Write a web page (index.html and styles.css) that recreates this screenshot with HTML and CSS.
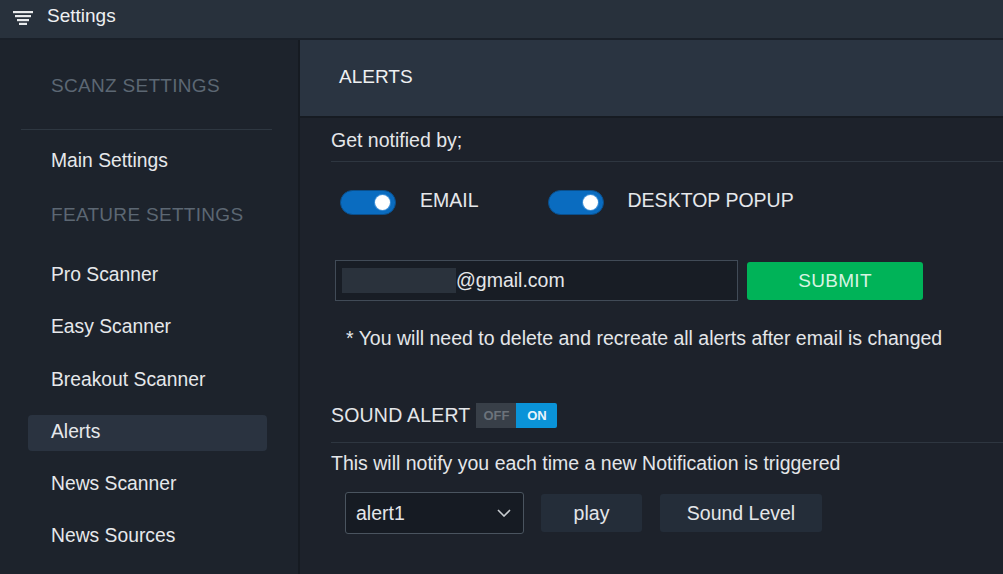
FILE: index.html
```html
<!DOCTYPE html>
<html>
<head>
<meta charset="utf-8">
<link rel="stylesheet" href="styles.css">
</head>
<body>
<div class="app">
  <header class="topbar">
    <svg class="menu-icon" width="20" height="14" viewBox="0 0 20 14">
      <rect x="0" y="0" width="20" height="2.2" fill="#e8eaec"/>
      <rect x="2" y="4" width="16" height="2.2" fill="#e8eaec"/>
      <rect x="4" y="8" width="12" height="2.2" fill="#e8eaec"/>
      <rect x="6" y="11.8" width="8" height="2.2" fill="#e8eaec"/>
    </svg>
    <span class="topbar-title">Settings</span>
  </header>
  <div class="body">
    <aside class="sidebar">
      <div class="sec-title first">SCANZ SETTINGS</div>
      <div class="side-divider"></div>
      <div class="item main-item">Main Settings</div>
      <div class="sec-title feature">FEATURE SETTINGS</div>
      <nav class="items">
        <div class="item">Pro Scanner</div>
        <div class="item">Easy Scanner</div>
        <div class="item">Breakout Scanner</div>
        <div class="item active">Alerts</div>
        <div class="item">News Scanner</div>
        <div class="item">News Sources</div>
      </nav>
    </aside>
    <main class="main">
      <div class="main-header">ALERTS</div>
      <div class="content">
        <div class="text-line notified">Get notified by;</div>
        <div class="divider"></div>
        <div class="toggle-row">
          <span class="toggle"><span class="knob"></span></span>
          <span class="toggle-label">EMAIL</span>
          <span class="toggle second"><span class="knob"></span></span>
          <span class="toggle-label">DESKTOP POPUP</span>
        </div>
        <div class="email-row">
          <div class="email-input"><span class="masked"></span><span class="email-text">@gmail.com</span></div>
          <button class="submit">SUBMIT</button>
        </div>
        <div class="text-line note">* You will need to delete and recreate all alerts after email is changed</div>
        <div class="sound-row">
          <span class="sound-label">SOUND ALERT</span>
          <span class="onoff"><span class="off">OFF</span><span class="on">ON</span></span>
        </div>
        <div class="divider sound-divider"></div>
        <div class="text-line notify-text">This will notify you each time a new Notification is triggered</div>
        <div class="controls">
          <div class="select"><span>alert1</span>
            <svg class="chev" width="14" height="8" viewBox="0 0 14 8"><path d="M1 1 L7 7 L13 1" fill="none" stroke="#c8ccd0" stroke-width="1.6"/></svg>
          </div>
          <button class="btn play">play</button>
          <button class="btn level">Sound Level</button>
        </div>
      </div>
    </main>
  </div>
</div>
</body>
</html>
```
FILE: styles.css
```css
* { box-sizing: border-box; }
html, body { margin: 0; padding: 0; }
body {
  width: 1003px;
  height: 574px;
  overflow: hidden;
  background: #1d222b;
  font-family: "Liberation Sans", Arial, sans-serif;
  color: #e4e6e9;
  font-size: 19.5px;
}
.app { display: flex; flex-direction: column; height: 574px; }
.topbar {
  height: 40px;
  background: #28313c;
  border-bottom: 2px solid #1a2029;
  display: flex;
  align-items: center;
  padding: 0 0 6px 13px;
}
.menu-icon { display: block; margin-top: 4px; }
.topbar-title { margin-left: 14px; font-size: 19px; color: #eef0f2; }
.body { flex: 1; display: flex; min-height: 0; }
.sidebar {
  width: 300px;
  background: #1d232c;
  border-right: 2px solid #161b22;
  padding-top: 34px;
}
.sec-title {
  margin-left: 51px;
  height: 24px;
  line-height: 24px;
  color: #5c6773;
  font-size: 19px;
  letter-spacing: 0.3px;
}
.side-divider {
  height: 1px;
  background: #2e3741;
  margin: 31px 26px 0 21px;
}
.item {
  height: 36px;
  line-height: 34px;
  margin: 0 31px 0 28px;
  padding-left: 23px;
  border-radius: 4px;
  color: #e6e8eb;
  font-size: 19.3px;
}
.main-item { margin-top: 14px; }
.feature { margin-top: 23px; }
.items { margin-top: 31px; display: flex; flex-direction: column; gap: 16.3px; }
.item.active { background: #2a3340; }
.main { flex: 1; display: flex; flex-direction: column; }
.main-header {
  height: 78px;
  line-height: 74px;
  background: #2a3441;
  border-bottom: 2px solid #161b22;
  padding-left: 39px;
  font-size: 19px;
  color: #eef0f2;
}
.content { padding-left: 31px; }
.text-line { height: 24px; line-height: 24px; }
.notified { margin-top: 10px; }
.divider { height: 1px; background: #2e3640; margin-top: 9px; }
.toggle-row { display: flex; align-items: center; margin-top: 28px; height: 25px; }
.toggle {
  width: 56px;
  height: 25px;
  border-radius: 13px;
  background: #0a6cc0;
  border: 1px solid #0a4f8c;
  margin-left: 9px;
  position: relative;
}
.toggle.second { margin-left: 69px; }
.knob {
  position: absolute;
  right: 5px;
  top: 4px;
  width: 15px;
  height: 15px;
  border-radius: 50%;
  background: #ffffff;
  box-shadow: 0 0 0 1px #3d8fd6;
}
.toggle-label { margin-left: 24px; color: #e6e8eb; position: relative; top: -2px; }
.email-row { display: flex; align-items: center; margin-top: 45px; height: 41px; }
.email-input {
  margin-left: 4px;
  width: 403px;
  height: 41px;
  border: 1.5px solid #414b57;
  background: #181d25;
  display: flex;
  align-items: center;
  padding-left: 6px;
}
.masked { width: 114px; height: 25px; background: #2a323c; }
.email-text { color: #e4e6e9; }
.submit {
  margin-left: 9px;
  width: 176px;
  height: 38px;
  border: none;
  border-radius: 3px;
  background: #00b358;
  color: #d6f4e2;
  font-family: "Liberation Sans", Arial, sans-serif;
  font-size: 19px;
  letter-spacing: 0.3px;
}
.note { margin-top: 25px; margin-left: 15px; }
.sound-row { display: flex; align-items: center; margin-top: 52px; height: 27px; }
.sound-label { letter-spacing: 0.2px; }
.onoff { display: flex; margin-left: 6px; height: 25px; font-size: 13px; font-weight: bold; }
.off, .on { display: flex; align-items: center; justify-content: center; }
.off { width: 40px; background: #383f48; color: #6c737b; }
.on { width: 41px; background: #0a93d8; color: #e8f4fb; border-radius: 0 2px 2px 0; }
.sound-divider { margin-top: 13px; }
.notify-text { margin-top: 8px; }
.controls { display: flex; align-items: center; margin-top: 17px; height: 42px; }
.select {
  margin-left: 14px;
  width: 179px;
  height: 42px;
  border: 1.5px solid #4a545f;
  border-radius: 3px;
  background: #161b23;
  display: flex;
  align-items: center;
  justify-content: space-between;
  padding: 0 12px 0 10px;
  color: #e4e6e9;
}
.chev { display: block; }
.btn {
  height: 38px;
  border: none;
  border-radius: 3px;
  background: #242d39;
  color: #e4e6e9;
  font-family: "Liberation Sans", Arial, sans-serif;
  font-size: 19.5px;
}
.play { margin-left: 17px; width: 101px; }
.level { margin-left: 18px; width: 162px; }
```
